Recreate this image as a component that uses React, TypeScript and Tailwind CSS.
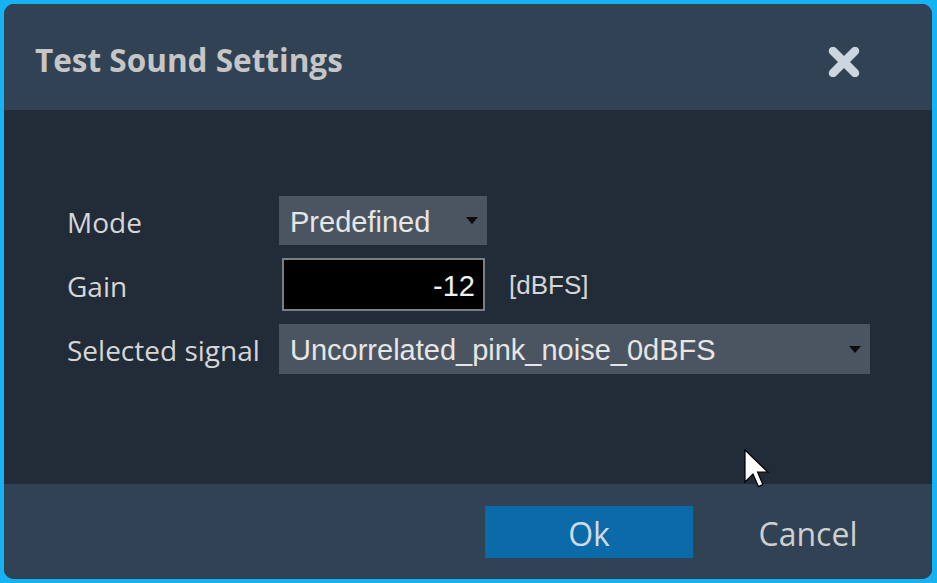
const labelFont = { fontFamily: '"Open Sans", "Noto Sans", sans-serif' };

const Caret = () => (
  <svg width="12" height="7" viewBox="0 0 12 7" className="shrink-0">
    <path d="M0 0 H12 L6 7 Z" fill="#0d0d0d" />
  </svg>
);

const Dropdown = ({ value, className }: { value: string; className?: string }) => {
  return (
    <div
      className={`${className ?? ""} flex items-center justify-between bg-[#4b5561] pl-[11px] pr-[9px] text-[29px] text-[#e6e6e6] font-['Liberation_Sans',Arial,sans-serif]`}
    >
      <span className="leading-none mt-[3px]">{value}</span>
      <Caret />
    </div>
  );
};

const Row = ({ label, children }: { label: string; children: React.ReactNode }) => {
  return (
    <div className="flex items-center">
      <span className="w-[212px] text-[28px] text-[#d6d6d6] leading-none mt-[2px]" style={labelFont}>
        {label}
      </span>
      {children}
    </div>
  );
};

const App = () => {
  return (
    <div className="w-full h-[583px] bg-[#16b2f2] pt-[4px] pl-[4px] pr-[5px] pb-[4px]">
      <div className="relative h-full flex flex-col rounded-[10px] overflow-hidden bg-[#222c38]">
        {/* header */}
        <div className="h-[106px] shrink-0 flex items-center justify-between bg-[#304254] pl-[31px] pr-[72px]">
          <h1
            className="text-[31.5px] font-bold text-[#c6c6c6] mt-[5px]"
            style={labelFont}
          >
            Test Sound Settings
          </h1>
          <svg width="32" height="30" viewBox="0 0 32 30" className="mt-[10px]">
            <path
              d="M5 4 L27 26 M27 4 L5 26"
              stroke="#cdd5de"
              strokeWidth="8.5"
              strokeLinecap="round"
            />
          </svg>
        </div>

        {/* body */}
        <div className="flex-1 flex flex-col gap-[13px] pl-[63px] pt-[86px]">
          <Row label="Mode">
            <Dropdown value="Predefined" className="w-[208px] h-[49px]" />
          </Row>
          <Row label="Gain">
            <div className="ml-[3px] w-[203px] h-[53px] bg-black border-2 border-[#7b7f84] flex items-center justify-end pr-[8px]">
              <span className="text-[29px] text-[#f0f0f0] leading-none mt-[3px] font-['Liberation_Sans',Arial,sans-serif]">
                -12
              </span>
            </div>
            <span className="ml-[24px] mt-[2px] text-[26px] text-[#d6d6d6] font-['Liberation_Sans',Arial,sans-serif]">
              [dBFS]
            </span>
          </Row>
          <Row label="Selected signal">
            <Dropdown
              value="Uncorrelated_pink_noise_0dBFS"
              className="w-[591px] h-[50px]"
            />
          </Row>
        </div>

        {/* footer */}
        <div className="h-[95px] shrink-0 bg-[#304254] flex justify-end items-start gap-[11px] pt-[22px] pr-[20px]">
          <button
            className="w-[208px] h-[52px] bg-[#0b6aa8] text-[32px] text-[#cfdbe6] leading-none pt-[4px]"
            style={labelFont}
          >
            Ok
          </button>
          <button
            className="w-[208px] h-[52px] text-[32px] text-[#cfcfcf] leading-none pt-[4px]"
            style={labelFont}
          >
            Cancel
          </button>
        </div>

        {/* mouse pointer */}
        <svg
          width="26"
          height="40"
          viewBox="0 0 13 20"
          className="absolute left-[740px] top-[445px]"
        >
          <path
            d="M0.5 0.5 L0.5 16.5 L4.5 12.5 L7.2 18.8 L9.4 17.8 L6.8 11.6 L12 11.6 Z"
            fill="#ffffff"
            stroke="#000000"
            strokeWidth="0.6"
            strokeLinejoin="miter"
          />
        </svg>
      </div>
    </div>
  );
};

export default App;
